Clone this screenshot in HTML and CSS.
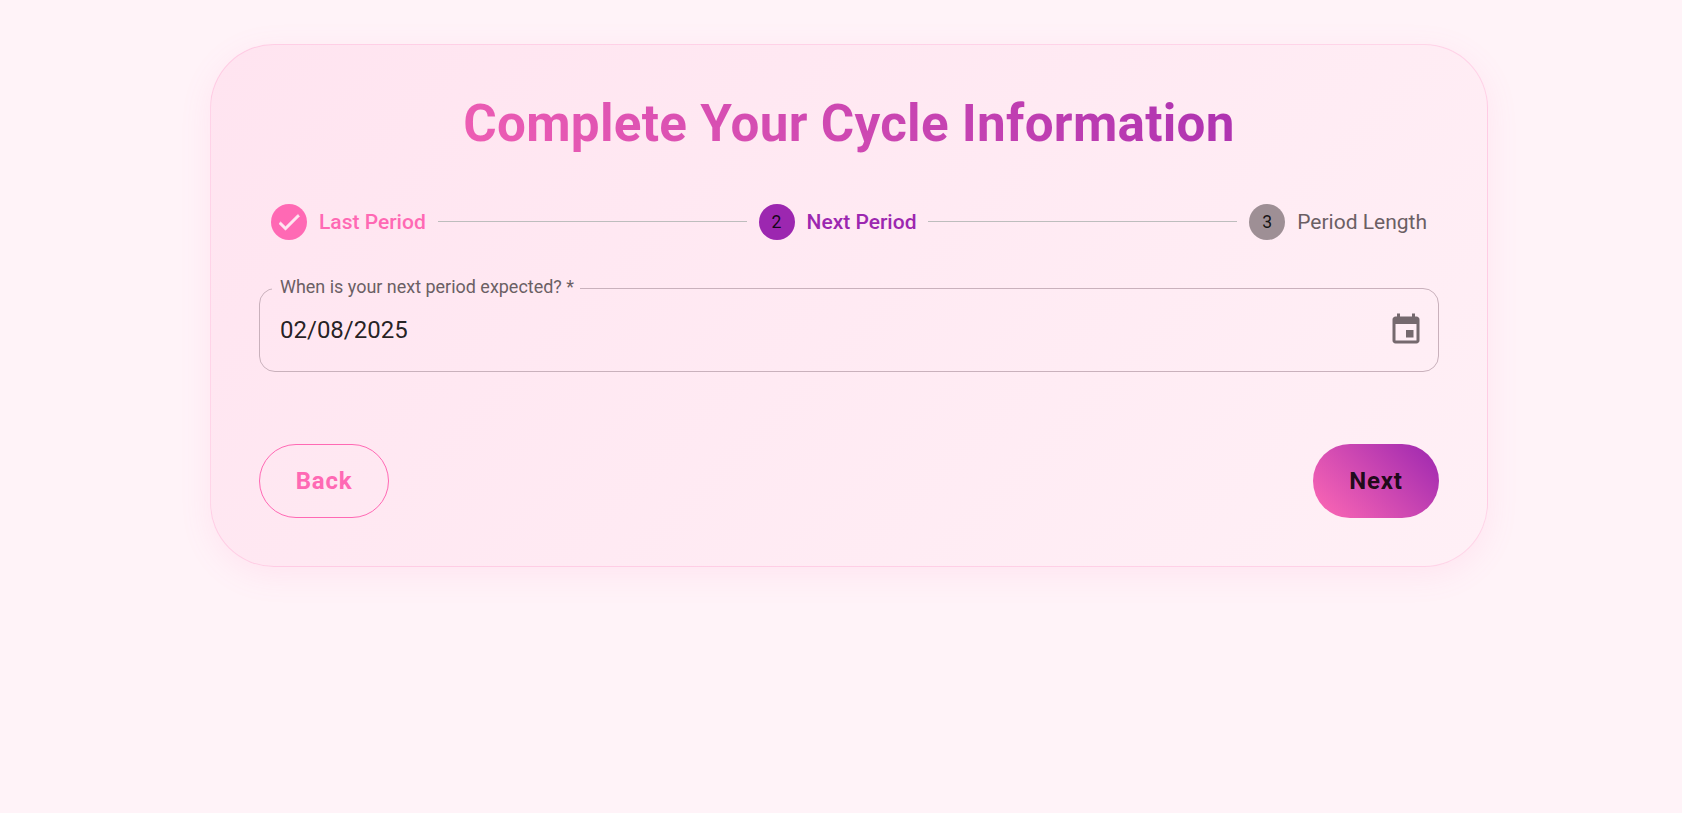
FILE: index.html
```html
<!DOCTYPE html>
<html lang="en">
<head>
<meta charset="utf-8">
<title>Complete Your Cycle Information</title>
<link rel="stylesheet" href="styles.css">
</head>
<body>
<main class="page">
  <section class="card">
    <h1 class="title">Complete Your Cycle Information</h1>
    <ol class="stepper">
      <li class="step step-done">
        <span class="dot"><svg class="check" viewBox="0 0 24 24"><path d="M9 16.17 4.83 12l-1.42 1.41L9 19 21 7l-1.41-1.41z"/></svg></span>
        <span class="step-label">Last Period</span>
      </li>
      <li class="connector"></li>
      <li class="step step-active">
        <span class="dot">2</span>
        <span class="step-label">Next Period</span>
      </li>
      <li class="connector"></li>
      <li class="step step-todo">
        <span class="dot">3</span>
        <span class="step-label">Period Length</span>
      </li>
    </ol>
    <fieldset class="field">
      <legend class="field-label">When is your next period expected? *</legend>
      <span class="field-value">02/08/2025</span>
      <svg class="calendar" viewBox="0 0 24 24"><path d="M17 12h-5v5h5v-5zM16 1v2H8V1H6v2H5c-1.11 0-1.99.9-1.99 2L3 19c0 1.1.89 2 2 2h14c1.1 0 2-.9 2-2V5c0-1.1-.9-2-2-2h-1V1h-2zm3 18H5V8h14v11z"/></svg>
    </fieldset>
    <div class="actions">
      <button class="btn btn-back" type="button">Back</button>
      <button class="btn btn-next" type="button">Next</button>
    </div>
  </section>
</main>
</body>
</html>
```
FILE: styles.css
```css
* { box-sizing: border-box; }
html, body { margin: 0; height: 100%; }
body {
  background: #fff3f8;
  font-family: Roboto, "Liberation Sans", sans-serif;
  overflow: hidden;
}
.page { padding: 44px 194px 0 210px; }
.card {
  height: 523px;
  padding: 48px;
  border: 1px solid rgba(255, 105, 180, 0.2);
  border-radius: 64px;
  background: linear-gradient(135deg, #ffe4f0 0%, #fff0f6 100%);
  box-shadow: 0 8px 32px rgba(255, 105, 180, 0.1);
}
.title {
  margin: 0;
  padding-top: 1px;
  font-size: 51.2px;
  letter-spacing: 0.28px;
  line-height: 60px;
  font-weight: 700;
  text-align: center;
  background: linear-gradient(45deg, #ff69b4 0%, #9c27b0 100%);
  -webkit-background-clip: text;
  background-clip: text;
  color: transparent;
}
.stepper {
  display: flex;
  align-items: center;
  gap: 12px;
  margin: 50px 0 0;
  padding: 0 12px;
  list-style: none;
}
.step { display: flex; align-items: center; gap: 12px; }
.dot {
  display: flex;
  align-items: center;
  justify-content: center;
  width: 36px;
  height: 36px;
  border-radius: 50%;
  font-size: 17.6px;
  color: rgba(0, 0, 0, 0.87);
}
.step-label { font-size: 21px; line-height: 36px; white-space: nowrap; }
.connector { flex: 1; height: 1px; margin-bottom: 1px; background: #bdbdbd; }
.step-done .dot { background: #ff69b4; }
.step-done .step-label { color: #ff69b4; font-weight: 500; }
.step-active .dot { background: #9c27b0; }
.step-active .step-label { color: #9c27b0; font-weight: 500; }
.step-todo .dot { background: #9e8f95; }
.step-todo .step-label { color: #6b5f64; }
.check { width: 28px; height: 28px; fill: #ffe6f1; stroke: #ffe6f1; stroke-width: 0.6; stroke-linejoin: round; }
.field {
  display: flex;
  align-items: center;
  justify-content: space-between;
  height: 97px;
  margin: 35px 0 0;
  padding: 0 14px 13px 20px;
  border: 1px solid #c9b1bc;
  border-radius: 16px;
  min-width: 0;
}
.field-label {
  margin-left: -8px;
  padding: 0 6px 2px 8px;
  font-size: 17.97px;
  line-height: 24px;
  color: #6b5f64;
}
.field-value {
  font-size: 24px;
  line-height: 32px;
  color: rgba(0, 0, 0, 0.87);
}
.calendar { width: 36px; height: 36px; fill: #75696e; }
.actions {
  display: flex;
  justify-content: space-between;
  margin-top: 72px;
}
.btn {
  height: 74px;
  border-radius: 37px;
  font-family: inherit;
  font-size: 24px;
  font-weight: 700;
  letter-spacing: 0.8px;
  padding: 0;
  cursor: pointer;
}
.btn-back {
  width: 130px;
  border: 1px solid #ff69b4;
  background: transparent;
  color: #ff69b4;
}
.btn-next {
  width: 126px;
  border: 0;
  background: linear-gradient(45deg, #ff69b4 0%, #9c27b0 100%);
  color: rgba(0, 0, 0, 0.87);
}
```
